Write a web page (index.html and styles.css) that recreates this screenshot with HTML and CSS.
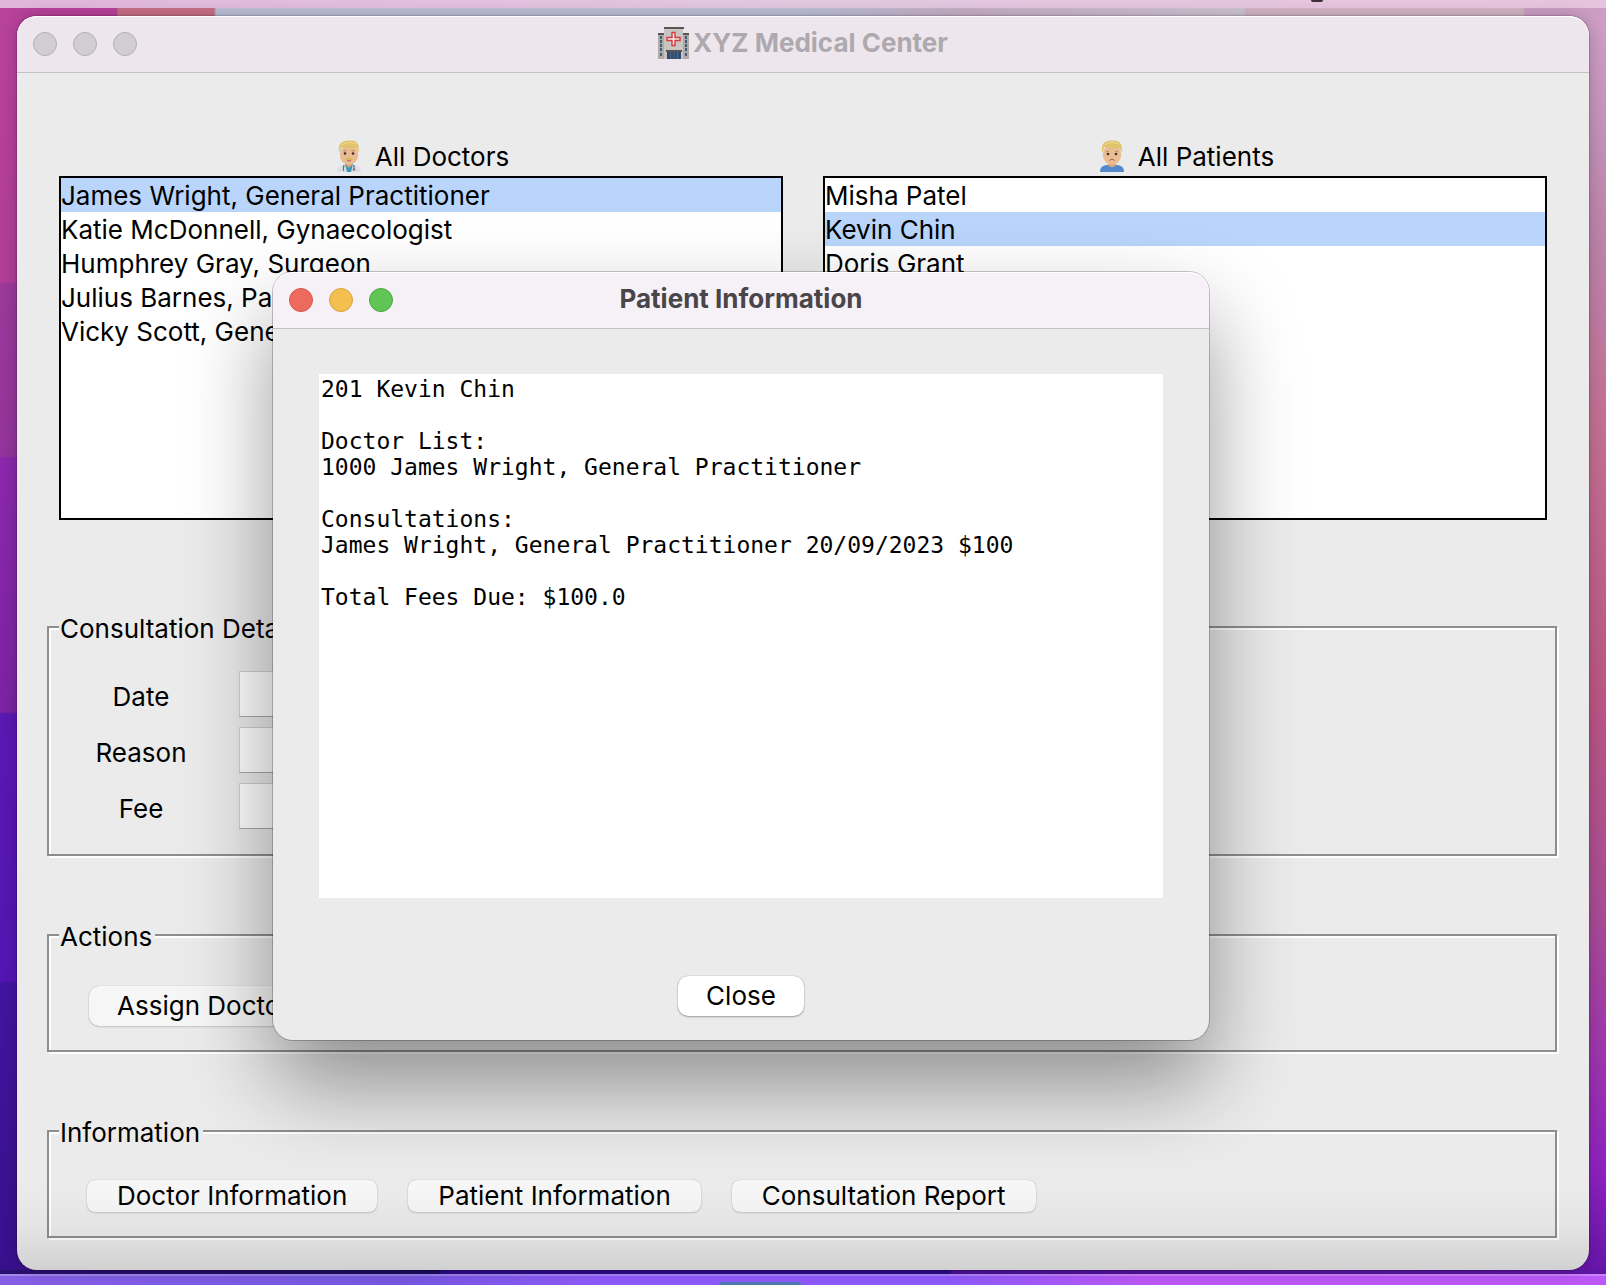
FILE: index.html
```html
<!DOCTYPE html>
<html lang="en">
<head>
<meta charset="utf-8">
<meta name="viewport" content="width=device-width, initial-scale=1">
<title>XYZ Medical Center</title>
<link rel="stylesheet" href="styles.css">
</head>
<body>
<div class="menubar"><span class="menubar-item"></span></div>

<div class="desktop">
  <main class="window">
    <header class="titlebar titlebar-inactive">
      <div class="lights"><span class="light"></span><span class="light"></span><span class="light"></span></div>
      <h1 class="title">
        <svg class="icon-hospital" viewBox="0 0 31 32" aria-hidden="true">
          <rect x="0" y="7" width="6" height="25" fill="#aeaaa6"/><rect x="25" y="7" width="6" height="25" fill="#aeaaa6"/>
          <rect x="0" y="6" width="6" height="2" fill="#5b5356"/><rect x="25" y="6" width="6" height="2" fill="#5b5356"/>
          <g fill="#3f5d7c"><path d="M2 9h2v3H2zM2 13h2v3H2zM2 17h2v3H2zM2 21h2v3H2zM2 26h2v3H2zM27 9h2v3h-2zM27 13h2v3h-2zM27 17h2v3h-2zM27 21h2v3h-2zM27 26h2v3h-2z"/></g>
          <rect x="6" y="1" width="19" height="31" fill="#c9c5c2"/><rect x="6" y="0" width="20" height="2" fill="#5b5356"/>
          <path d="M14 5.500h3v5h5v3h-5v5h-3v-5H9v-3h5z" fill="#eee" stroke="#d8393f" stroke-width="1.400"/>
          <rect x="8" y="23" width="16" height="2" fill="#5a5254"/><rect x="9" y="25" width="14" height="7" fill="#2f4c70"/>
          <path d="M12.500 25v7M16 25v7M19.500 25v7" stroke="#587390" stroke-width=".8"/>
        </svg>XYZ Medical Center</h1>
    </header>

    <div class="content">
      <div class="lists">
        <div class="list-group">
          <label class="list-label" for="doctors">
            <svg class="icon-person" viewBox="0 0 24 32" aria-hidden="true">
              <path d="M0 32c0-5 3-6 7-7h10c4 1 7 2 7 7z" fill="#dcdfe4"/><path d="M8 24h8l-2 8h-4z" fill="#3797b4"/>
              <path d="M9 20h6v5l-3 3-3-3z" fill="#d9a577"/><ellipse cx="12" cy="14.500" rx="9.200" ry="10.500" fill="#e9bd93"/>
              <path d="M2.500 13C0 4 5 0 13 .500c8-.5 10 5.500 8.500 12.500l-1.500-5c-5 0-10 0-16-1z" fill="#dfc36d"/><path d="M5 5c4-3 9-3 14-1" fill="none" stroke="#f1dc91"/>
              <circle cx="8" cy="13.500" r="1.300" fill="#42302a"/><circle cx="16" cy="13.500" r="1.300" fill="#42302a"/>
              <path d="M6.500 10.800h3M14.500 10.800h3" stroke="#a58042" stroke-width=".8"/><path d="M8 19.500c2-2.500 6-2.500 8 0-2 .8-6 .8-8 0z" fill="#d8b95c"/><path d="M10 20.800h4" stroke="#a75e4a"/>
              <path d="M7 25c-1 4-1 5 0 6M17 25v4" fill="none" stroke="#686d75" stroke-width="1.200"/><circle cx="17" cy="29.500" r="1.300" fill="#777d85"/>
            </svg>All Doctors</label>
          <select class="listbox" id="doctors" size="10">
            <option selected>James Wright, General Practitioner</option>
            <option>Katie McDonnell, Gynaecologist</option>
            <option>Humphrey Gray, Surgeon</option>
            <option>Julius Barnes, Paediatrician</option>
            <option>Vicky Scott, General Practitioner</option>
          </select>
        </div>
        <div class="list-group">
          <label class="list-label" for="patients">
            <svg class="icon-person" viewBox="0 0 24 32" aria-hidden="true">
              <path d="M0 32c0-5 3-7 8-7h8c5 0 8 2 8 7z" fill="#5388cb"/>
              <path d="M8 20h8v5c-2 3-6 3-8 0z" fill="#d9a577"/><ellipse cx="12" cy="14.500" rx="9.200" ry="10.500" fill="#e9bd93"/>
              <path d="M2.500 13C0 4 5 0 13 .500c8-.5 10 5.500 8.500 12.500l-1.500-5c-5 0-10 0-16-1z" fill="#dfc36d"/><path d="M5 5c4-3 9-3 14-1" fill="none" stroke="#f1dc91"/>
              <circle cx="8" cy="14" r="1.300" fill="#42302a"/><circle cx="16" cy="14" r="1.300" fill="#42302a"/>
              <path d="M6 12l3-1M15 11l3 1" stroke="#a58042" stroke-width=".8"/><path d="M9.500 20.500c1.500-1.500 3.500-1.500 5 0" fill="none" stroke="#a75e4a"/>
            </svg>All Patients</label>
          <select class="listbox" id="patients" size="10">
            <option>Misha Patel</option>
            <option selected>Kevin Chin</option>
            <option>Doris Grant</option>
          </select>
        </div>
      </div>

      <fieldset class="group group-details">
        <legend class="group-title">Consultation Details</legend>
        <div class="form">
          <label for="date">Date</label><input class="field" id="date" type="text">
          <label for="reason">Reason</label><input class="field" id="reason" type="text">
          <label for="fee">Fee</label><input class="field" id="fee" type="text">
        </div>
      </fieldset>

      <fieldset class="group group-actions">
        <legend class="group-title">Actions</legend>
        <div class="buttons"><button class="button button-tall" type="button">Assign Doctor</button></div>
      </fieldset>

      <fieldset class="group group-info">
        <legend class="group-title">Information</legend>
        <div class="buttons">
          <button class="button" type="button">Doctor Information</button>
          <button class="button" type="button">Patient Information</button>
          <button class="button" type="button">Consultation Report</button>
        </div>
      </fieldset>
    </div>

    <dialog class="dialog" open aria-labelledby="dialog-title">
      <header class="titlebar titlebar-active">
        <div class="lights"><span class="light light-red"></span><span class="light light-yellow"></span><span class="light light-green"></span></div>
        <h2 class="title" id="dialog-title">Patient Information</h2>
      </header>
      <div class="dialog-body">
        <textarea class="report" readonly aria-label="Patient details">201 Kevin Chin

Doctor List:
1000 James Wright, General Practitioner

Consultations:
James Wright, General Practitioner 20/09/2023 $100

Total Fees Due: $100.0</textarea>
        <button class="button button-tall button-default" type="button">Close</button>
      </div>
    </dialog>
  </main>
</div>

<div class="dock"><span class="dock-item"></span></div>
</body>
</html>
```
FILE: styles.css
```css
* { box-sizing: border-box; }

body {
  margin: 0;
  min-height: 100vh;
  display: flex;
  flex-direction: column;
  overflow: hidden;
  font: 26px/30px Inter, "Liberation Sans", sans-serif;
  color: #000;
}

.menubar {
  height: 8px;
  display: flex;
  justify-content: flex-end;
  padding-right: 283px;
  background: linear-gradient(90deg, #e1b6dc, #e3c8e0 50%, #e7c4de);
}
.menubar-item { width: 12px; height: 2px; background: #3d3039; border-radius: 0 0 2px 2px; }

.desktop {
  flex: 1;
  padding: 8px 17px 4px;
  background:
    linear-gradient(90deg, #b8419a 117px, #c86f87 118px 214px, #bbbfd8 216px 50%, #c7afc6 60%, #cfc4d3 1244px, #d3b4c5 1246px 1523px, #cc9dc4 1525px) top / 100% 8px no-repeat,
    linear-gradient(90deg, #2a0f70, #1b0b5b 440px, #2c0b84 442px 950px, #4b1293 952px, #5e17a5) bottom / 100% 4px no-repeat,
    linear-gradient(#b9429c, #b03d97 274px, #9b3a9a 276px, #93349a 448px, #8b28ac 450px, #7b23a2 704px, #5b18b2 706px, #5316b2 973px, #43159f 975px, #38108c) left / 60px 100% no-repeat,
    linear-gradient(#cf9fc7, #bc85ac 220px, #c36f92 420px, #b95584 700px, #a84c94 900px, #9d35ae 1050px, #8c21c0 1170px, #6415a8) right / 60px 100% no-repeat,
    #6b2299;
}

.window {
  position: relative;
  border-radius: 20px;
  background: #ebebeb;
  box-shadow: 0 0 2px rgba(0, 0, 0, .5), 0 0 16px rgba(0, 0, 0, .2);
}
.window::after {
  content: "";
  position: absolute;
  inset: auto 0 0;
  height: 84px;
  border-radius: 0 0 20px 20px;
  background: linear-gradient(transparent, rgba(0, 0, 0, .03) 50%, rgba(0, 0, 0, .11));
  pointer-events: none;
}

.titlebar {
  height: 57px;
  display: grid;
  grid-template-columns: 1fr auto 1fr;
  align-items: center;
  padding: 0 16px;
  border-bottom: 1px solid #c3c1c3;
  border-radius: 20px 20px 0 0;
  box-shadow: inset 0 1px #fff;
}
.titlebar-inactive { background: #ede7ed; color: #aea9ae; }
.titlebar-active { background: #f6f0f7; color: #49464a; }

.title {
  display: flex;
  align-items: center;
  gap: 4px;
  margin: 0;
  padding-bottom: 2px;
  font-size: 26px;
  font-weight: 700;
  line-height: 32px;
}
.icon-hospital { width: 31px; height: 32px; }

.lights { display: flex; gap: 16px; }
.light { width: 24px; height: 24px; border-radius: 50%; background: #d2cdd3; border: 1px solid #b5b0b6; }
.light-red { background: #ed6a5f; border-color: #d45549; }
.light-yellow { background: #f5bf4f; border-color: #d9a33d; }
.light-green { background: #61c555; border-color: #4ea73f; }

.content { padding: 67px 30px 32px; }

.lists { display: grid; grid-template-columns: 1fr 1fr; gap: 40px; padding: 0 12px; }
.list-group { display: flex; flex-direction: column; }
.list-label { display: flex; justify-content: center; height: 36px; line-height: 34px; gap: 14px; padding-left: 4px; }
.icon-person { width: 24px; height: 32px; }

.listbox {
  height: 344px;
  padding: 0;
  border: 2px solid #000;
  border-radius: 0;
  background: #fff;
  color: #000;
  font: inherit;
  overflow: hidden;
  outline: 0;
}
.listbox option { height: 34px; min-height: 34px; padding: 2px 0 0; color: #000; }
.listbox option:checked { background: #b9d5fb linear-gradient(#b9d5fb, #b9d5fb); color: #000 !important; }

.group {
  min-width: 0;
  margin: 62px 2px 0 0;
  border: 2px solid #8e8e8e;
  box-shadow: inset 2px 2px #fff, 2px 2px #fff;
}
.group-details { margin-top: 90px; padding: 27px 0 25px; }
.group-actions { padding: 34px 0 24px; }
.group-info { padding: 32px 0 24px; }
.group-title { margin-left: 10px; padding: 4px 3px 0 1px; background: #ebebeb; }

.form {
  display: grid;
  grid-template-columns: 184px 360px;
  gap: 10px 6px;
  align-items: center;
  text-align: center;
}
.form label { padding-top: 5px; }
.field {
  height: 46px;
  border: 1px solid #d0d0d0;
  border-bottom-color: #a8a8a8;
  background: #fff;
  font: inherit;
}

.buttons { display: flex; gap: 31px; padding: 0 38px; }
.group-actions .buttons { padding: 0 40px; }
.button {
  height: 32px;
  padding: 0 30px;
  border: 0;
  border-radius: 8px;
  background: #f6f6f6;
  box-shadow: 0 0 1px rgba(0, 0, 0, .3), 0 1px 2px rgba(0, 0, 0, .15);
  color: #000;
  font: inherit;
}
.button-tall { height: 40px; padding: 0 28px; border-radius: 10px; }
.button-default { background: #fff; box-shadow: 0 0 1px rgba(0, 0, 0, .4), 0 1px 2px rgba(0, 0, 0, .3); }

.dialog {
  position: absolute;
  top: 256px;
  left: 256px;
  width: 936px;
  max-width: none;
  margin: 0;
  padding: 0;
  border: 0;
  border-radius: 20px;
  background: #ebebeb;
  color: #000;
  box-shadow: 0 0 0 1px rgba(0, 0, 0, .22), 0 44px 88px rgba(0, 0, 0, .4);
}
.dialog-body {
  display: flex;
  flex-direction: column;
  align-items: center;
  gap: 78px;
  padding: 45px 46px 24px;
}
.report {
  width: 100%;
  height: 524px;
  padding: 2px;
  border: 0;
  background: #fff;
  color: #000;
  font: 23px/26px "DejaVu Sans Mono", monospace;
  resize: none;
  outline: 0;
}

.dock {
  height: 11px;
  display: flex;
  justify-content: center;
  align-items: flex-end;
  padding-right: 86px;
  border-top: 2px solid rgba(255, 255, 255, .25);
  background: linear-gradient(90deg, #8560e6, #7557e0 400px, #8f5af8 600px 950px, #bc58f8 1150px) border-box;
}
.dock-item { width: 82px; height: 3px; border-radius: 8px 8px 0 0; background: #517bb0; }
```
